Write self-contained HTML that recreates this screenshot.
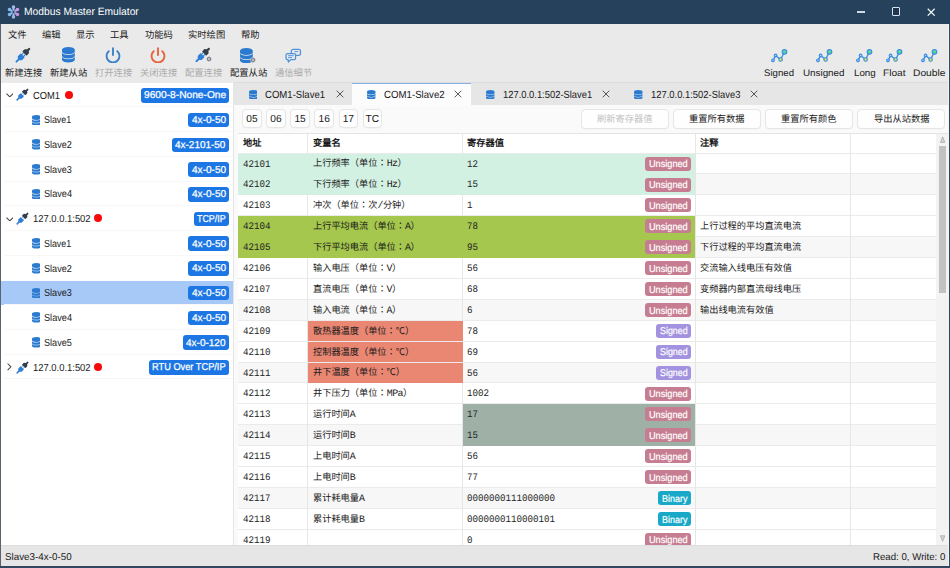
<!DOCTYPE html>
<html lang="zh-CN">
<head>
<meta charset="utf-8">
<title>Modbus Master Emulator</title>
<style>
*{box-sizing:border-box;margin:0;padding:0}
html,body{width:950px;height:568px;overflow:hidden;background:#eaeaea}
body{font-family:"Liberation Sans",sans-serif;font-size:10px;color:#1a1a1a;position:relative;text-rendering:geometricPrecision}
.x{position:absolute;white-space:nowrap;display:block}
.m{font-family:"Liberation Mono",monospace}
.b{font-weight:bold}
.a{font-size:10px;letter-spacing:-0.5px}
#win{position:absolute;left:0;top:0;width:950px;height:568px;overflow:hidden;background:#eaeaea}
.bd{background:#1c77e4;color:#fff;border-radius:3px;text-align:center}
.tg{border-radius:3px;color:#fff;text-align:center}
.btn{background:#fefefe;border:1px solid #e6e6e6;border-radius:4px;box-shadow:0 0.5px 0.5px rgba(0,0,0,0.04)}
</style>
</head>
<body>
<div id="win">

<div class="x" style="left:0;top:0;width:950px;height:23.6px;background:#25415b"></div>
<svg class="x" style="left:6.60px;top:4.60px;width:13px;height:14px" viewBox="-6.5 -7 13 14"><path d="M0.00 -2.30 L0.00 -5.00" stroke="#a9b9ea" stroke-width="2.1" stroke-linecap="round"/><circle cx="0.00" cy="-5.00" r="1.75" fill="#a9b9ea"/><path d="M1.91 -1.15 L3.98 -2.50" stroke="#c99ae2" stroke-width="2.1" stroke-linecap="round"/><circle cx="3.98" cy="-2.50" r="1.75" fill="#c99ae2"/><path d="M1.91 1.15 L3.98 2.50" stroke="#c292e0" stroke-width="2.1" stroke-linecap="round"/><circle cx="3.98" cy="2.50" r="1.75" fill="#c292e0"/><path d="M0.00 2.30 L0.00 5.00" stroke="#a3b3e4" stroke-width="2.1" stroke-linecap="round"/><circle cx="0.00" cy="5.00" r="1.75" fill="#a3b3e4"/><path d="M-1.91 1.15 L-3.98 2.50" stroke="#7fb9e8" stroke-width="2.1" stroke-linecap="round"/><circle cx="-3.98" cy="2.50" r="1.75" fill="#7fb9e8"/><path d="M-1.91 -1.15 L-3.98 -2.50" stroke="#86bfea" stroke-width="2.1" stroke-linecap="round"/><circle cx="-3.98" cy="-2.50" r="1.75" fill="#86bfea"/><circle cx="0" cy="0" r="1.5" fill="none" stroke="#7e9fd2" stroke-width="0.9"/></svg>
<span id="t1" class="x " style="top:5.11px;font-size:10.70px;line-height:14.98px;left:24.00px;color:#fff;transform-origin:0 50%;transform:scaleX(0.9615);">Modbus Master Emulator</span>
<div class="x" style="left:857.1px;top:11.3px;width:7.8px;height:1.3px;background:#cfdae6"></div>
<div class="x" style="left:891.8px;top:7.4px;width:8.3px;height:8.3px;border:1.1px solid #dbe4ee;border-radius:1px;background:#1e3650"></div>
<svg class="x" style="left:927.40px;top:7.50px;width:8.4px;height:8.4px" viewBox="0 0 8 8"><path d="M0.7 0.7 L7.3 7.3 M7.3 0.7 L0.7 7.3" stroke="#f4f7fa" stroke-width="1.15"/></svg>
<span id="t2" class="x " style="top:27.72px;font-size:9.40px;line-height:13.16px;left:8.30px;transform-origin:0 50%;transform:scaleX(0.9912);">文件</span>
<span id="t3" class="x " style="top:27.72px;font-size:9.40px;line-height:13.16px;left:42.30px;transform-origin:0 50%;transform:scaleX(0.9912);">编辑</span>
<span id="t4" class="x " style="top:27.72px;font-size:9.40px;line-height:13.16px;left:76.30px;transform-origin:0 50%;transform:scaleX(0.9912);">显示</span>
<span id="t5" class="x " style="top:27.72px;font-size:9.40px;line-height:13.16px;left:110.30px;transform-origin:0 50%;transform:scaleX(0.9912);">工具</span>
<span id="t6" class="x " style="top:27.72px;font-size:9.40px;line-height:13.16px;left:145.20px;transform-origin:0 50%;transform:scaleX(0.9914);">功能码</span>
<span id="t7" class="x " style="top:27.72px;font-size:9.40px;line-height:13.16px;left:187.80px;transform-origin:0 50%;transform:scaleX(0.9916);">实时绘图</span>
<span id="t8" class="x " style="top:27.72px;font-size:9.40px;line-height:13.16px;left:241.00px;transform-origin:0 50%;transform:scaleX(0.9912);">帮助</span>
<svg class="x" style="left:15.00px;top:47.00px;width:16.00px;height:16.00px;opacity:1" viewBox="0 0 16 16"><g transform="translate(8.1 8) rotate(-45)"><path d="M-9.4 0 H-4.4" stroke="#2f7fd6" stroke-width="1.9" stroke-linecap="round"/><path d="M-6.3 -1.2 L-4.6 -2.9 H-1.1 A0.7 0.7 0 0 1 -0.4 -2.2 V2.2 A0.7 0.7 0 0 1 -1.1 2.9 H-4.6 L-6.3 1.2 Z" fill="#2f7fd6"/><path d="M-0.7 -1.3 H1.8 M-0.7 1.3 H1.8" stroke="#2f7fd6" stroke-width="1.0"/><path d="M1.8 -2.3 A0.7 0.7 0 0 1 2.5 -3.0 H5.3 L6.9 -1.1 H8.6 A1 1 0 0 1 8.6 1.1 H6.9 L5.3 3.0 H2.5 A0.7 0.7 0 0 1 1.8 2.3 Z" fill="#343e4b"/></g></svg>
<span id="t9" class="x " style="top:66.42px;font-size:9.40px;line-height:13.16px;left:4.60px;color:#1a1a1a;transform-origin:0 50%;transform:scaleX(0.9916);">新建连接</span>
<svg class="x" style="left:61.90px;top:47.30px;width:12.80px;height:15.50px;opacity:1" viewBox="0 0 12 15" preserveAspectRatio="none"><path d="M0 2.7 A6 2.7 0 0 1 12 2.7 V4.4 A6 2.6 0 0 1 0 4.4 Z" fill="#2a7bcf"/><path d="M0 5.15 A6 2.6 0 0 0 12 5.15 V8.5 A6 2.6 0 0 1 0 8.5 Z" fill="#2a7bcf"/><path d="M0 9.25 A6 2.6 0 0 0 12 9.25 V12.3 A6 2.7 0 0 1 0 12.3 Z" fill="#2a7bcf"/></svg>
<span id="t10" class="x " style="top:66.42px;font-size:9.40px;line-height:13.16px;left:49.60px;color:#1a1a1a;transform-origin:0 50%;transform:scaleX(0.9916);">新建从站</span>
<svg class="x" style="left:105.00px;top:46.90px;width:16px;height:16px" viewBox="0 0 16 16"><path d="M3.7 4.2 A6.45 6.45 0 1 0 12.3 4.2" fill="none" stroke="#3b82c8" stroke-width="1.9" stroke-linecap="round"/><path d="M8 1.2 V8.1" stroke="#3b82c8" stroke-width="1.9" stroke-linecap="round"/></svg>
<span id="t11" class="x " style="top:66.42px;font-size:9.40px;line-height:13.16px;left:94.60px;color:#a9a9a9;transform-origin:0 50%;transform:scaleX(0.9916);">打开连接</span>
<svg class="x" style="left:150.00px;top:46.90px;width:16px;height:16px" viewBox="0 0 16 16"><path d="M3.7 4.2 A6.45 6.45 0 1 0 12.3 4.2" fill="none" stroke="#e5653f" stroke-width="1.9" stroke-linecap="round"/><path d="M8 1.2 V8.1" stroke="#e5653f" stroke-width="1.9" stroke-linecap="round"/></svg>
<span id="t12" class="x " style="top:66.42px;font-size:9.40px;line-height:13.16px;left:139.60px;color:#a9a9a9;transform-origin:0 50%;transform:scaleX(0.9916);">关闭连接</span>
<svg class="x" style="left:195.30px;top:46.80px;width:15.60px;height:15.60px;opacity:1" viewBox="0 0 16 16"><g transform="translate(8.1 8) rotate(-45)"><path d="M-9.4 0 H-4.4" stroke="#2f7fd6" stroke-width="1.9" stroke-linecap="round"/><path d="M-6.3 -1.2 L-4.6 -2.9 H-1.1 A0.7 0.7 0 0 1 -0.4 -2.2 V2.2 A0.7 0.7 0 0 1 -1.1 2.9 H-4.6 L-6.3 1.2 Z" fill="#2f7fd6"/><path d="M-0.7 -1.3 H1.8 M-0.7 1.3 H1.8" stroke="#2f7fd6" stroke-width="1.0"/><path d="M1.8 -2.3 A0.7 0.7 0 0 1 2.5 -3.0 H5.3 L6.9 -1.1 H8.6 A1 1 0 0 1 8.6 1.1 H6.9 L5.3 3.0 H2.5 A0.7 0.7 0 0 1 1.8 2.3 Z" fill="#343e4b"/></g></svg><svg class="x" style="left:204.56px;top:55.38px;width:8px;height:8px" viewBox="-4 -4 8 8"><circle r="2.6" fill="#eaeaea"/><circle r="1.5" fill="none" stroke="#7b818a" stroke-width="1.25"/><path d="M0 -2.6 V2.6 M-2.6 0 H2.6 M-1.85 -1.85 L1.85 1.85 M-1.85 1.85 L1.85 -1.85" stroke="#7b818a" stroke-width="0.85" stroke-dasharray="0.7 3.8 0.7 10"/></svg>
<span id="t13" class="x " style="top:66.42px;font-size:9.40px;line-height:13.16px;left:184.60px;color:#a9a9a9;transform-origin:0 50%;transform:scaleX(0.9916);">配置连接</span>
<svg class="x" style="left:239.90px;top:47.50px;width:12.80px;height:15.20px;opacity:1" viewBox="0 0 12 15" preserveAspectRatio="none"><path d="M0 2.7 A6 2.7 0 0 1 12 2.7 V4.4 A6 2.6 0 0 1 0 4.4 Z" fill="#2a7bcf"/><path d="M0 5.15 A6 2.6 0 0 0 12 5.15 V8.5 A6 2.6 0 0 1 0 8.5 Z" fill="#2a7bcf"/><path d="M0 9.25 A6 2.6 0 0 0 12 9.25 V12.3 A6 2.7 0 0 1 0 12.3 Z" fill="#2a7bcf"/></svg><svg class="x" style="left:248.96px;top:56.12px;width:8px;height:8px" viewBox="-4 -4 8 8"><circle r="2.6" fill="#eaeaea"/><circle r="1.5" fill="none" stroke="#7b818a" stroke-width="1.25"/><path d="M0 -2.6 V2.6 M-2.6 0 H2.6 M-1.85 -1.85 L1.85 1.85 M-1.85 1.85 L1.85 -1.85" stroke="#7b818a" stroke-width="0.85" stroke-dasharray="0.7 3.8 0.7 10"/></svg>
<span id="t14" class="x " style="top:66.42px;font-size:9.40px;line-height:13.16px;left:229.60px;color:#1a1a1a;transform-origin:0 50%;transform:scaleX(0.9916);">配置从站</span>
<svg class="x" style="left:285.00px;top:47.60px;width:17px;height:15px" viewBox="0 0 17 15"><rect x="6.35" y="1.35" width="9.1" height="6.0" rx="1.7" fill="#eaeaea" stroke="#4f93da" stroke-width="1.3"/><path d="M2.5 5.55 H9.1 A1.45 1.45 0 0 1 10.55 7 V10.2 A1.45 1.45 0 0 1 9.1 11.65 H5.9 L3.4 14 L3.1 11.65 H2.5 A1.45 1.45 0 0 1 1.05 10.2 V7 A1.45 1.45 0 0 1 2.5 5.55 Z" fill="#eaeaea" stroke="#4f93da" stroke-width="1.3" stroke-linejoin="round"/><path d="M3.1 7.7 H8.6 M3.1 9.6 H7 M9.4 3.6 H13.2" stroke="#4f93da" stroke-width="0.95"/></svg>
<span id="t15" class="x " style="top:66.42px;font-size:9.40px;line-height:13.16px;left:274.60px;color:#a9a9a9;transform-origin:0 50%;transform:scaleX(0.9916);">通信细节</span>
<svg class="x" style="left:771.10px;top:47.60px;width:17px;height:15px" viewBox="0 0 17 15"><path d="M2 12.3 L4.6 7.5 L9.6 11.5 L13.5 3.8" fill="none" stroke="#3a8de0" stroke-width="1.4"/><circle cx="2" cy="12.3" r="1.35" fill="#a9d3f7" stroke="#3a8de0" stroke-width="1.1"/><circle cx="4.6" cy="7.5" r="1.35" fill="#a9d3f7" stroke="#3a8de0" stroke-width="1.1"/><circle cx="9.6" cy="11.5" r="1.75" fill="#d6e64c" stroke="#3a8de0" stroke-width="1.1"/><circle cx="13.5" cy="3.8" r="2.35" fill="#55d49c" stroke="#3a8de0" stroke-width="1.1"/></svg>
<span id="t16" class="x " style="top:67.05px;font-size:9.50px;line-height:13.30px;left:764.30px;transform-origin:0 50%;transform:scaleX(1.0137);">Signed</span>
<svg class="x" style="left:815.80px;top:47.60px;width:17px;height:15px" viewBox="0 0 17 15"><path d="M2 12.3 L4.6 7.5 L9.6 11.5 L13.5 3.8" fill="none" stroke="#3a8de0" stroke-width="1.4"/><circle cx="2" cy="12.3" r="1.35" fill="#a9d3f7" stroke="#3a8de0" stroke-width="1.1"/><circle cx="4.6" cy="7.5" r="1.35" fill="#a9d3f7" stroke="#3a8de0" stroke-width="1.1"/><circle cx="9.6" cy="11.5" r="1.75" fill="#d6e64c" stroke="#3a8de0" stroke-width="1.1"/><circle cx="13.5" cy="3.8" r="2.35" fill="#55d49c" stroke="#3a8de0" stroke-width="1.1"/></svg>
<span id="t17" class="x " style="top:67.05px;font-size:9.50px;line-height:13.30px;left:803.25px;transform-origin:0 50%;transform:scaleX(1.0339);">Unsigned</span>
<svg class="x" style="left:856.20px;top:47.60px;width:17px;height:15px" viewBox="0 0 17 15"><path d="M2 12.3 L4.6 7.5 L9.6 11.5 L13.5 3.8" fill="none" stroke="#3a8de0" stroke-width="1.4"/><circle cx="2" cy="12.3" r="1.35" fill="#a9d3f7" stroke="#3a8de0" stroke-width="1.1"/><circle cx="4.6" cy="7.5" r="1.35" fill="#a9d3f7" stroke="#3a8de0" stroke-width="1.1"/><circle cx="9.6" cy="11.5" r="1.75" fill="#d6e64c" stroke="#3a8de0" stroke-width="1.1"/><circle cx="13.5" cy="3.8" r="2.35" fill="#55d49c" stroke="#3a8de0" stroke-width="1.1"/></svg>
<span id="t18" class="x " style="top:67.05px;font-size:9.50px;line-height:13.30px;left:853.55px;transform-origin:0 50%;transform:scaleX(1.0265);">Long</span>
<svg class="x" style="left:885.80px;top:47.60px;width:17px;height:15px" viewBox="0 0 17 15"><path d="M2 12.3 L4.6 7.5 L9.6 11.5 L13.5 3.8" fill="none" stroke="#3a8de0" stroke-width="1.4"/><circle cx="2" cy="12.3" r="1.35" fill="#a9d3f7" stroke="#3a8de0" stroke-width="1.1"/><circle cx="4.6" cy="7.5" r="1.35" fill="#a9d3f7" stroke="#3a8de0" stroke-width="1.1"/><circle cx="9.6" cy="11.5" r="1.75" fill="#d6e64c" stroke="#3a8de0" stroke-width="1.1"/><circle cx="13.5" cy="3.8" r="2.35" fill="#55d49c" stroke="#3a8de0" stroke-width="1.1"/></svg>
<span id="t19" class="x " style="top:67.05px;font-size:9.50px;line-height:13.30px;left:882.75px;transform-origin:0 50%;transform:scaleX(1.0651);">Float</span>
<svg class="x" style="left:920.80px;top:47.60px;width:17px;height:15px" viewBox="0 0 17 15"><path d="M2 12.3 L4.6 7.5 L9.6 11.5 L13.5 3.8" fill="none" stroke="#3a8de0" stroke-width="1.4"/><circle cx="2" cy="12.3" r="1.35" fill="#a9d3f7" stroke="#3a8de0" stroke-width="1.1"/><circle cx="4.6" cy="7.5" r="1.35" fill="#a9d3f7" stroke="#3a8de0" stroke-width="1.1"/><circle cx="9.6" cy="11.5" r="1.75" fill="#d6e64c" stroke="#3a8de0" stroke-width="1.1"/><circle cx="13.5" cy="3.8" r="2.35" fill="#55d49c" stroke="#3a8de0" stroke-width="1.1"/></svg>
<span id="t20" class="x " style="top:67.05px;font-size:9.50px;line-height:13.30px;left:912.75px;transform-origin:0 50%;transform:scaleX(1.0794);">Double</span>
<div class="x" style="left:233.5px;top:81.8px;width:715px;height:1px;background:#dcdcdc"></div>
<div class="x" style="left:1px;top:82.60px;width:232.2px;height:463.00px;background:#fff"></div>
<svg class="x" style="left:5.60px;top:92.96px;width:7.6px;height:4.5px" viewBox="0 0 7.6 4.5"><path d="M0.5 0.6 L3.8 3.9 L7.1 0.6" fill="none" stroke="#484848" stroke-width="1.05"/></svg>
<svg class="x" style="left:16.20px;top:88.46px;width:13.00px;height:13.00px;opacity:1" viewBox="0 0 16 16"><g transform="translate(8.1 8) rotate(-45)"><path d="M-9.4 0 H-4.4" stroke="#2f7fd6" stroke-width="1.9" stroke-linecap="round"/><path d="M-6.3 -1.2 L-4.6 -2.9 H-1.1 A0.7 0.7 0 0 1 -0.4 -2.2 V2.2 A0.7 0.7 0 0 1 -1.1 2.9 H-4.6 L-6.3 1.2 Z" fill="#2f7fd6"/><path d="M-0.7 -1.3 H1.8 M-0.7 1.3 H1.8" stroke="#2f7fd6" stroke-width="1.0"/><path d="M1.8 -2.3 A0.7 0.7 0 0 1 2.5 -3.0 H5.3 L6.9 -1.1 H8.6 A1 1 0 0 1 8.6 1.1 H6.9 L5.3 3.0 H2.5 A0.7 0.7 0 0 1 1.8 2.3 Z" fill="#343e4b"/></g></svg>
<span id="t21" class="x " style="top:89.52px;font-size:10.20px;line-height:14.28px;left:32.70px;transform-origin:0 50%;transform:scaleX(0.9138);">COM1</span>
<div class="x" style="left:65.00px;top:90.56px;width:8.1px;height:8.1px;border-radius:50%;background:#f90a0a"></div>
<div class="x bd" style="left:140.90px;top:88.06px;width:88.40px;height:14.6px"></div>
<span id="t22" class="x " style="top:89.36px;font-size:10.00px;line-height:14.00px;left:144.00px;color:#fff;transform-origin:0 50%;transform:scaleX(1.0197);-webkit-text-stroke:0.25px #fff;">9600-8-None-One</span>
<div class="x" style="left:4px;top:106.33px;width:229px;height:1px;background:#f8f8f8"></div>
<svg class="x" style="left:31.70px;top:114.59px;width:8.70px;height:10.60px;opacity:1" viewBox="0 0 12 15" preserveAspectRatio="none"><path d="M0 2.7 A6 2.7 0 0 1 12 2.7 V4.4 A6 2.6 0 0 1 0 4.4 Z" fill="#2a7bcf"/><path d="M0 5.15 A6 2.6 0 0 0 12 5.15 V8.5 A6 2.6 0 0 1 0 8.5 Z" fill="#2a7bcf"/><path d="M0 9.25 A6 2.6 0 0 0 12 9.25 V12.3 A6 2.7 0 0 1 0 12.3 Z" fill="#2a7bcf"/></svg>
<span id="t23" class="x " style="top:114.25px;font-size:10.20px;line-height:14.28px;left:44.40px;transform-origin:0 50%;transform:scaleX(0.8730);">Slave1</span>
<div class="x bd" style="left:188.20px;top:112.80px;width:41.10px;height:14.6px"></div>
<span id="t24" class="x " style="top:114.09px;font-size:10.00px;line-height:14.00px;left:191.65px;color:#fff;transform-origin:0 50%;transform:scaleX(1.0087);-webkit-text-stroke:0.25px #fff;">4x-0-50</span>
<div class="x" style="left:4px;top:131.06px;width:229px;height:1px;background:#f8f8f8"></div>
<svg class="x" style="left:31.70px;top:139.33px;width:8.70px;height:10.60px;opacity:1" viewBox="0 0 12 15" preserveAspectRatio="none"><path d="M0 2.7 A6 2.7 0 0 1 12 2.7 V4.4 A6 2.6 0 0 1 0 4.4 Z" fill="#2a7bcf"/><path d="M0 5.15 A6 2.6 0 0 0 12 5.15 V8.5 A6 2.6 0 0 1 0 8.5 Z" fill="#2a7bcf"/><path d="M0 9.25 A6 2.6 0 0 0 12 9.25 V12.3 A6 2.7 0 0 1 0 12.3 Z" fill="#2a7bcf"/></svg>
<span id="t25" class="x " style="top:138.99px;font-size:10.20px;line-height:14.28px;left:44.40px;transform-origin:0 50%;transform:scaleX(0.8923);">Slave2</span>
<div class="x bd" style="left:172.00px;top:137.53px;width:57.30px;height:14.6px"></div>
<span id="t26" class="x " style="top:138.83px;font-size:10.00px;line-height:14.00px;left:175.45px;color:#fff;transform-origin:0 50%;transform:scaleX(0.9962);-webkit-text-stroke:0.25px #fff;">4x-2101-50</span>
<div class="x" style="left:4px;top:155.79px;width:229px;height:1px;background:#f8f8f8"></div>
<svg class="x" style="left:31.70px;top:164.06px;width:8.70px;height:10.60px;opacity:1" viewBox="0 0 12 15" preserveAspectRatio="none"><path d="M0 2.7 A6 2.7 0 0 1 12 2.7 V4.4 A6 2.6 0 0 1 0 4.4 Z" fill="#2a7bcf"/><path d="M0 5.15 A6 2.6 0 0 0 12 5.15 V8.5 A6 2.6 0 0 1 0 8.5 Z" fill="#2a7bcf"/><path d="M0 9.25 A6 2.6 0 0 0 12 9.25 V12.3 A6 2.7 0 0 1 0 12.3 Z" fill="#2a7bcf"/></svg>
<span id="t27" class="x " style="top:163.72px;font-size:10.20px;line-height:14.28px;left:44.40px;transform-origin:0 50%;transform:scaleX(0.8923);">Slave3</span>
<div class="x bd" style="left:188.20px;top:162.25px;width:41.10px;height:14.6px"></div>
<span id="t28" class="x " style="top:163.56px;font-size:10.00px;line-height:14.00px;left:191.65px;color:#fff;transform-origin:0 50%;transform:scaleX(1.0087);-webkit-text-stroke:0.25px #fff;">4x-0-50</span>
<div class="x" style="left:4px;top:180.52px;width:229px;height:1px;background:#f8f8f8"></div>
<svg class="x" style="left:31.70px;top:188.78px;width:8.70px;height:10.60px;opacity:1" viewBox="0 0 12 15" preserveAspectRatio="none"><path d="M0 2.7 A6 2.7 0 0 1 12 2.7 V4.4 A6 2.6 0 0 1 0 4.4 Z" fill="#2a7bcf"/><path d="M0 5.15 A6 2.6 0 0 0 12 5.15 V8.5 A6 2.6 0 0 1 0 8.5 Z" fill="#2a7bcf"/><path d="M0 9.25 A6 2.6 0 0 0 12 9.25 V12.3 A6 2.7 0 0 1 0 12.3 Z" fill="#2a7bcf"/></svg>
<span id="t29" class="x " style="top:188.45px;font-size:10.20px;line-height:14.28px;left:44.40px;transform-origin:0 50%;transform:scaleX(0.8987);">Slave4</span>
<div class="x bd" style="left:188.20px;top:186.98px;width:41.10px;height:14.6px"></div>
<span id="t30" class="x " style="top:188.28px;font-size:10.00px;line-height:14.00px;left:191.65px;color:#fff;transform-origin:0 50%;transform:scaleX(1.0087);-webkit-text-stroke:0.25px #fff;">4x-0-50</span>
<div class="x" style="left:4px;top:205.25px;width:229px;height:1px;background:#f8f8f8"></div>
<svg class="x" style="left:5.60px;top:216.62px;width:7.6px;height:4.5px" viewBox="0 0 7.6 4.5"><path d="M0.5 0.6 L3.8 3.9 L7.1 0.6" fill="none" stroke="#484848" stroke-width="1.05"/></svg>
<svg class="x" style="left:16.20px;top:212.12px;width:13.00px;height:13.00px;opacity:1" viewBox="0 0 16 16"><g transform="translate(8.1 8) rotate(-45)"><path d="M-9.4 0 H-4.4" stroke="#2f7fd6" stroke-width="1.9" stroke-linecap="round"/><path d="M-6.3 -1.2 L-4.6 -2.9 H-1.1 A0.7 0.7 0 0 1 -0.4 -2.2 V2.2 A0.7 0.7 0 0 1 -1.1 2.9 H-4.6 L-6.3 1.2 Z" fill="#2f7fd6"/><path d="M-0.7 -1.3 H1.8 M-0.7 1.3 H1.8" stroke="#2f7fd6" stroke-width="1.0"/><path d="M1.8 -2.3 A0.7 0.7 0 0 1 2.5 -3.0 H5.3 L6.9 -1.1 H8.6 A1 1 0 0 1 8.6 1.1 H6.9 L5.3 3.0 H2.5 A0.7 0.7 0 0 1 1.8 2.3 Z" fill="#343e4b"/></g></svg>
<span id="t31" class="x " style="top:213.18px;font-size:10.20px;line-height:14.28px;left:32.70px;transform-origin:0 50%;transform:scaleX(0.9241);">127.0.0.1:502</span>
<div class="x" style="left:94.30px;top:214.22px;width:8.1px;height:8.1px;border-radius:50%;background:#f90a0a"></div>
<div class="x bd" style="left:193.70px;top:211.72px;width:35.60px;height:14.6px"></div>
<span id="t32" class="x " style="top:213.02px;font-size:10.00px;line-height:14.00px;left:197.20px;color:#fff;transform-origin:0 50%;transform:scaleX(0.8873);-webkit-text-stroke:0.25px #fff;">TCP/IP</span>
<div class="x" style="left:4px;top:229.98px;width:229px;height:1px;background:#f8f8f8"></div>
<svg class="x" style="left:31.70px;top:238.25px;width:8.70px;height:10.60px;opacity:1" viewBox="0 0 12 15" preserveAspectRatio="none"><path d="M0 2.7 A6 2.7 0 0 1 12 2.7 V4.4 A6 2.6 0 0 1 0 4.4 Z" fill="#2a7bcf"/><path d="M0 5.15 A6 2.6 0 0 0 12 5.15 V8.5 A6 2.6 0 0 1 0 8.5 Z" fill="#2a7bcf"/><path d="M0 9.25 A6 2.6 0 0 0 12 9.25 V12.3 A6 2.7 0 0 1 0 12.3 Z" fill="#2a7bcf"/></svg>
<span id="t33" class="x " style="top:237.91px;font-size:10.20px;line-height:14.28px;left:44.40px;transform-origin:0 50%;transform:scaleX(0.8730);">Slave1</span>
<div class="x bd" style="left:188.20px;top:236.44px;width:41.10px;height:14.6px"></div>
<span id="t34" class="x " style="top:237.75px;font-size:10.00px;line-height:14.00px;left:191.65px;color:#fff;transform-origin:0 50%;transform:scaleX(1.0087);-webkit-text-stroke:0.25px #fff;">4x-0-50</span>
<div class="x" style="left:4px;top:254.71px;width:229px;height:1px;background:#f8f8f8"></div>
<svg class="x" style="left:31.70px;top:262.97px;width:8.70px;height:10.60px;opacity:1" viewBox="0 0 12 15" preserveAspectRatio="none"><path d="M0 2.7 A6 2.7 0 0 1 12 2.7 V4.4 A6 2.6 0 0 1 0 4.4 Z" fill="#2a7bcf"/><path d="M0 5.15 A6 2.6 0 0 0 12 5.15 V8.5 A6 2.6 0 0 1 0 8.5 Z" fill="#2a7bcf"/><path d="M0 9.25 A6 2.6 0 0 0 12 9.25 V12.3 A6 2.7 0 0 1 0 12.3 Z" fill="#2a7bcf"/></svg>
<span id="t35" class="x " style="top:262.63px;font-size:10.20px;line-height:14.28px;left:44.40px;transform-origin:0 50%;transform:scaleX(0.8923);">Slave2</span>
<div class="x bd" style="left:188.20px;top:261.17px;width:41.10px;height:14.6px"></div>
<span id="t36" class="x " style="top:262.47px;font-size:10.00px;line-height:14.00px;left:191.65px;color:#fff;transform-origin:0 50%;transform:scaleX(1.0087);-webkit-text-stroke:0.25px #fff;">4x-0-50</span>
<div class="x" style="left:1px;top:280.54px;width:232.2px;height:24.73px;background:#a6c9f8"></div>
<svg class="x" style="left:31.70px;top:287.70px;width:8.70px;height:10.60px;opacity:1" viewBox="0 0 12 15" preserveAspectRatio="none"><path d="M0 2.7 A6 2.7 0 0 1 12 2.7 V4.4 A6 2.6 0 0 1 0 4.4 Z" fill="#2a7bcf"/><path d="M0 5.15 A6 2.6 0 0 0 12 5.15 V8.5 A6 2.6 0 0 1 0 8.5 Z" fill="#2a7bcf"/><path d="M0 9.25 A6 2.6 0 0 0 12 9.25 V12.3 A6 2.7 0 0 1 0 12.3 Z" fill="#2a7bcf"/></svg>
<span id="t37" class="x " style="top:287.37px;font-size:10.20px;line-height:14.28px;left:44.40px;transform-origin:0 50%;transform:scaleX(0.8923);">Slave3</span>
<div class="x bd" style="left:188.20px;top:285.90px;width:41.10px;height:14.6px"></div>
<span id="t38" class="x " style="top:287.20px;font-size:10.00px;line-height:14.00px;left:191.65px;color:#fff;transform-origin:0 50%;transform:scaleX(1.0087);-webkit-text-stroke:0.25px #fff;">4x-0-50</span>
<div class="x" style="left:4px;top:304.17px;width:229px;height:1px;background:#f8f8f8"></div>
<svg class="x" style="left:31.70px;top:312.43px;width:8.70px;height:10.60px;opacity:1" viewBox="0 0 12 15" preserveAspectRatio="none"><path d="M0 2.7 A6 2.7 0 0 1 12 2.7 V4.4 A6 2.6 0 0 1 0 4.4 Z" fill="#2a7bcf"/><path d="M0 5.15 A6 2.6 0 0 0 12 5.15 V8.5 A6 2.6 0 0 1 0 8.5 Z" fill="#2a7bcf"/><path d="M0 9.25 A6 2.6 0 0 0 12 9.25 V12.3 A6 2.7 0 0 1 0 12.3 Z" fill="#2a7bcf"/></svg>
<span id="t39" class="x " style="top:312.09px;font-size:10.20px;line-height:14.28px;left:44.40px;transform-origin:0 50%;transform:scaleX(0.8987);">Slave4</span>
<div class="x bd" style="left:188.20px;top:310.63px;width:41.10px;height:14.6px"></div>
<span id="t40" class="x " style="top:311.93px;font-size:10.00px;line-height:14.00px;left:191.65px;color:#fff;transform-origin:0 50%;transform:scaleX(1.0087);-webkit-text-stroke:0.25px #fff;">4x-0-50</span>
<div class="x" style="left:4px;top:328.90px;width:229px;height:1px;background:#f8f8f8"></div>
<svg class="x" style="left:31.70px;top:337.16px;width:8.70px;height:10.60px;opacity:1" viewBox="0 0 12 15" preserveAspectRatio="none"><path d="M0 2.7 A6 2.7 0 0 1 12 2.7 V4.4 A6 2.6 0 0 1 0 4.4 Z" fill="#2a7bcf"/><path d="M0 5.15 A6 2.6 0 0 0 12 5.15 V8.5 A6 2.6 0 0 1 0 8.5 Z" fill="#2a7bcf"/><path d="M0 9.25 A6 2.6 0 0 0 12 9.25 V12.3 A6 2.7 0 0 1 0 12.3 Z" fill="#2a7bcf"/></svg>
<span id="t41" class="x " style="top:336.82px;font-size:10.20px;line-height:14.28px;left:44.40px;transform-origin:0 50%;transform:scaleX(0.8923);">Slave5</span>
<div class="x bd" style="left:182.90px;top:335.36px;width:46.40px;height:14.6px"></div>
<span id="t42" class="x " style="top:336.66px;font-size:10.00px;line-height:14.00px;left:186.35px;color:#fff;transform-origin:0 50%;transform:scaleX(1.0008);-webkit-text-stroke:0.25px #fff;">4x-0-120</span>
<div class="x" style="left:4px;top:353.63px;width:229px;height:1px;background:#f8f8f8"></div>
<svg class="x" style="left:7.40px;top:363.09px;width:4.5px;height:7.6px" viewBox="0 0 4.5 7.6"><path d="M0.6 0.5 L3.9 3.8 L0.6 7.1" fill="none" stroke="#484848" stroke-width="1.05"/></svg>
<svg class="x" style="left:16.20px;top:360.50px;width:13.00px;height:13.00px;opacity:1" viewBox="0 0 16 16"><g transform="translate(8.1 8) rotate(-45)"><path d="M-9.4 0 H-4.4" stroke="#2f7fd6" stroke-width="1.9" stroke-linecap="round"/><path d="M-6.3 -1.2 L-4.6 -2.9 H-1.1 A0.7 0.7 0 0 1 -0.4 -2.2 V2.2 A0.7 0.7 0 0 1 -1.1 2.9 H-4.6 L-6.3 1.2 Z" fill="#2f7fd6"/><path d="M-0.7 -1.3 H1.8 M-0.7 1.3 H1.8" stroke="#2f7fd6" stroke-width="1.0"/><path d="M1.8 -2.3 A0.7 0.7 0 0 1 2.5 -3.0 H5.3 L6.9 -1.1 H8.6 A1 1 0 0 1 8.6 1.1 H6.9 L5.3 3.0 H2.5 A0.7 0.7 0 0 1 1.8 2.3 Z" fill="#343e4b"/></g></svg>
<span id="t43" class="x " style="top:361.56px;font-size:10.20px;line-height:14.28px;left:32.70px;transform-origin:0 50%;transform:scaleX(0.9241);">127.0.0.1:502</span>
<div class="x" style="left:94.30px;top:362.59px;width:8.1px;height:8.1px;border-radius:50%;background:#f90a0a"></div>
<div class="x bd" style="left:149.10px;top:360.09px;width:80.20px;height:14.6px"></div>
<span id="t44" class="x " style="top:361.39px;font-size:10.00px;line-height:14.00px;left:152.40px;color:#fff;transform-origin:0 50%;transform:scaleX(0.9240);-webkit-text-stroke:0.25px #fff;">RTU Over TCP/IP</span>
<div class="x" style="left:4px;top:378.36px;width:229px;height:1px;background:#f5f5f5"></div>
<div class="x" style="left:233.2px;top:82.6px;width:4.4px;height:463px;background:#f7f7f7;border-left:0.7px solid #e4e4e4"></div>
<div class="x" style="left:234px;top:82.6px;width:714.5px;height:22.6px;background:#e6e6e6"></div>
<div class="x" style="left:234px;top:105.2px;width:714.5px;height:441px;background:#fafafa"></div>
<svg class="x" style="left:248.90px;top:89.90px;width:8.50px;height:9.40px;opacity:1" viewBox="0 0 12 15" preserveAspectRatio="none"><path d="M0 2.7 A6 2.7 0 0 1 12 2.7 V4.4 A6 2.6 0 0 1 0 4.4 Z" fill="#2a7bcf"/><path d="M0 5.15 A6 2.6 0 0 0 12 5.15 V8.5 A6 2.6 0 0 1 0 8.5 Z" fill="#2a7bcf"/><path d="M0 9.25 A6 2.6 0 0 0 12 9.25 V12.3 A6 2.7 0 0 1 0 12.3 Z" fill="#2a7bcf"/></svg>
<span id="t45" class="x " style="top:88.79px;font-size:10.30px;line-height:14.42px;left:265.00px;transform-origin:0 50%;transform:scaleX(0.9293);">COM1-Slave1</span>
<svg class="x" style="left:335.60px;top:90.30px;width:8px;height:8px" viewBox="0 0 8 8"><path d="M0.7 0.7 L7.3 7.3 M7.3 0.7 L0.7 7.3" stroke="#3c3c3c" stroke-width="0.85"/></svg>
<div class="x" style="left:352.10px;top:82.6px;width:118.90px;height:23px;background:#fcfcfc;border-top:1.4px solid #86b0e6"></div>
<svg class="x" style="left:367.40px;top:89.90px;width:8.50px;height:9.40px;opacity:1" viewBox="0 0 12 15" preserveAspectRatio="none"><path d="M0 2.7 A6 2.7 0 0 1 12 2.7 V4.4 A6 2.6 0 0 1 0 4.4 Z" fill="#2a7bcf"/><path d="M0 5.15 A6 2.6 0 0 0 12 5.15 V8.5 A6 2.6 0 0 1 0 8.5 Z" fill="#2a7bcf"/><path d="M0 9.25 A6 2.6 0 0 0 12 9.25 V12.3 A6 2.7 0 0 1 0 12.3 Z" fill="#2a7bcf"/></svg>
<span id="t46" class="x " style="top:88.79px;font-size:10.30px;line-height:14.42px;left:383.60px;transform-origin:0 50%;transform:scaleX(0.9386);">COM1-Slave2</span>
<svg class="x" style="left:454.20px;top:90.30px;width:8px;height:8px" viewBox="0 0 8 8"><path d="M0.7 0.7 L7.3 7.3 M7.3 0.7 L0.7 7.3" stroke="#3c3c3c" stroke-width="0.85"/></svg>
<svg class="x" style="left:486.00px;top:89.90px;width:8.50px;height:9.40px;opacity:1" viewBox="0 0 12 15" preserveAspectRatio="none"><path d="M0 2.7 A6 2.7 0 0 1 12 2.7 V4.4 A6 2.6 0 0 1 0 4.4 Z" fill="#2a7bcf"/><path d="M0 5.15 A6 2.6 0 0 0 12 5.15 V8.5 A6 2.6 0 0 1 0 8.5 Z" fill="#2a7bcf"/><path d="M0 9.25 A6 2.6 0 0 0 12 9.25 V12.3 A6 2.7 0 0 1 0 12.3 Z" fill="#2a7bcf"/></svg>
<span id="t47" class="x " style="top:88.79px;font-size:10.30px;line-height:14.42px;left:503.00px;transform-origin:0 50%;transform:scaleX(0.9111);">127.0.0.1:502-Slave1</span>
<svg class="x" style="left:601.60px;top:90.30px;width:8px;height:8px" viewBox="0 0 8 8"><path d="M0.7 0.7 L7.3 7.3 M7.3 0.7 L0.7 7.3" stroke="#3c3c3c" stroke-width="0.85"/></svg>
<svg class="x" style="left:634.00px;top:89.90px;width:8.50px;height:9.40px;opacity:1" viewBox="0 0 12 15" preserveAspectRatio="none"><path d="M0 2.7 A6 2.7 0 0 1 12 2.7 V4.4 A6 2.6 0 0 1 0 4.4 Z" fill="#2a7bcf"/><path d="M0 5.15 A6 2.6 0 0 0 12 5.15 V8.5 A6 2.6 0 0 1 0 8.5 Z" fill="#2a7bcf"/><path d="M0 9.25 A6 2.6 0 0 0 12 9.25 V12.3 A6 2.7 0 0 1 0 12.3 Z" fill="#2a7bcf"/></svg>
<span id="t48" class="x " style="top:88.79px;font-size:10.30px;line-height:14.42px;left:650.80px;transform-origin:0 50%;transform:scaleX(0.9131);">127.0.0.1:502-Slave3</span>
<svg class="x" style="left:749.80px;top:90.30px;width:8px;height:8px" viewBox="0 0 8 8"><path d="M0.7 0.7 L7.3 7.3 M7.3 0.7 L0.7 7.3" stroke="#3c3c3c" stroke-width="0.85"/></svg>
<div class="x btn" style="left:242.10px;top:108.6px;width:19.6px;height:19.9px"></div>
<span id="t49" class="x " style="top:112.86px;font-size:10.20px;line-height:14.28px;left:251.90px;transform:translateX(-50%);">05</span>
<div class="x btn" style="left:266.20px;top:108.6px;width:19.6px;height:19.9px"></div>
<span id="t50" class="x " style="top:112.86px;font-size:10.20px;line-height:14.28px;left:276.00px;transform:translateX(-50%);">06</span>
<div class="x btn" style="left:290.30px;top:108.6px;width:19.6px;height:19.9px"></div>
<span id="t51" class="x " style="top:112.86px;font-size:10.20px;line-height:14.28px;left:300.10px;transform:translateX(-50%);">15</span>
<div class="x btn" style="left:314.40px;top:108.6px;width:19.6px;height:19.9px"></div>
<span id="t52" class="x " style="top:112.86px;font-size:10.20px;line-height:14.28px;left:324.20px;transform:translateX(-50%);">16</span>
<div class="x btn" style="left:338.50px;top:108.6px;width:19.6px;height:19.9px"></div>
<span id="t53" class="x " style="top:112.86px;font-size:10.20px;line-height:14.28px;left:348.30px;transform:translateX(-50%);">17</span>
<div class="x btn" style="left:362.60px;top:108.6px;width:19.6px;height:19.9px"></div>
<span id="t54" class="x " style="top:112.86px;font-size:10.20px;line-height:14.28px;left:372.40px;transform:translateX(-50%);">TC</span>
<div class="x btn" style="left:580.60px;top:108.8px;width:88.00px;height:20px"></div>
<span id="t55" class="x " style="top:113.05px;font-size:9.35px;line-height:13.09px;left:596.90px;color:#c4c4c4;transform-origin:0 50%;transform:scaleX(0.9879);">刷新寄存器值</span>
<div class="x btn" style="left:672.80px;top:108.8px;width:88.00px;height:20px"></div>
<span id="t56" class="x " style="top:113.05px;font-size:9.35px;line-height:13.09px;left:689.10px;color:#1a1a1a;transform-origin:0 50%;transform:scaleX(0.9879);">重置所有数据</span>
<div class="x btn" style="left:765.00px;top:108.8px;width:88.00px;height:20px"></div>
<span id="t57" class="x " style="top:113.05px;font-size:9.35px;line-height:13.09px;left:781.30px;color:#1a1a1a;transform-origin:0 50%;transform:scaleX(0.9879);">重置所有颜色</span>
<div class="x btn" style="left:857.20px;top:108.8px;width:88.00px;height:20px"></div>
<span id="t58" class="x " style="top:113.05px;font-size:9.35px;line-height:13.09px;left:873.50px;color:#1a1a1a;transform-origin:0 50%;transform:scaleX(0.9879);">导出从站数据</span>
<div class="x" style="left:237.60px;top:132.80px;width:698.70px;height:412.80px;background:#fff;border-top:1px solid #e4e4e4"></div>
<div class="x" style="left:237.60px;top:174.10px;width:698.70px;height:20.90px;background:#f7f7f7"></div>
<div class="x" style="left:237.60px;top:236.80px;width:698.70px;height:20.90px;background:#f7f7f7"></div>
<div class="x" style="left:237.60px;top:299.50px;width:698.70px;height:20.90px;background:#f7f7f7"></div>
<div class="x" style="left:237.60px;top:362.20px;width:698.70px;height:20.90px;background:#f7f7f7"></div>
<div class="x" style="left:237.60px;top:424.90px;width:698.70px;height:20.90px;background:#f7f7f7"></div>
<div class="x" style="left:237.60px;top:487.60px;width:698.70px;height:20.90px;background:#f7f7f7"></div>
<div class="x" style="left:237.60px;top:152.55px;width:698.70px;height:1px;background:#ebebeb"></div>
<div class="x" style="left:237.60px;top:173.45px;width:698.70px;height:1px;background:#ebebeb"></div>
<div class="x" style="left:237.60px;top:194.35px;width:698.70px;height:1px;background:#ebebeb"></div>
<div class="x" style="left:237.60px;top:215.25px;width:698.70px;height:1px;background:#ebebeb"></div>
<div class="x" style="left:237.60px;top:236.15px;width:698.70px;height:1px;background:#ebebeb"></div>
<div class="x" style="left:237.60px;top:257.05px;width:698.70px;height:1px;background:#ebebeb"></div>
<div class="x" style="left:237.60px;top:277.95px;width:698.70px;height:1px;background:#ebebeb"></div>
<div class="x" style="left:237.60px;top:298.85px;width:698.70px;height:1px;background:#ebebeb"></div>
<div class="x" style="left:237.60px;top:319.75px;width:698.70px;height:1px;background:#ebebeb"></div>
<div class="x" style="left:237.60px;top:340.65px;width:698.70px;height:1px;background:#ebebeb"></div>
<div class="x" style="left:237.60px;top:361.55px;width:698.70px;height:1px;background:#ebebeb"></div>
<div class="x" style="left:237.60px;top:382.45px;width:698.70px;height:1px;background:#ebebeb"></div>
<div class="x" style="left:237.60px;top:403.35px;width:698.70px;height:1px;background:#ebebeb"></div>
<div class="x" style="left:237.60px;top:424.25px;width:698.70px;height:1px;background:#ebebeb"></div>
<div class="x" style="left:237.60px;top:445.15px;width:698.70px;height:1px;background:#ebebeb"></div>
<div class="x" style="left:237.60px;top:466.05px;width:698.70px;height:1px;background:#ebebeb"></div>
<div class="x" style="left:237.60px;top:486.95px;width:698.70px;height:1px;background:#ebebeb"></div>
<div class="x" style="left:237.60px;top:507.85px;width:698.70px;height:1px;background:#ebebeb"></div>
<div class="x" style="left:237.60px;top:528.75px;width:698.70px;height:1px;background:#ebebeb"></div>
<div class="x" style="left:307.30px;top:132.80px;width:1px;height:412.80px;background:#e6e6e6"></div>
<div class="x" style="left:462.10px;top:132.80px;width:1px;height:412.80px;background:#e6e6e6"></div>
<div class="x" style="left:694.80px;top:132.80px;width:1px;height:412.80px;background:#e6e6e6"></div>
<div class="x" style="left:850.00px;top:132.80px;width:1px;height:412.80px;background:#e6e6e6"></div>
<div class="x" style="left:237.60px;top:153.50px;width:70.20px;height:20.60px;background:#d3f1e3"></div>
<div class="x" style="left:308.25px;top:153.50px;width:154.35px;height:20.60px;background:#d3f1e3"></div>
<div class="x" style="left:463.05px;top:153.50px;width:232.25px;height:20.60px;background:#d3f1e3"></div>
<span id="t59" class="x m" style="top:158.55px;font-size:10.00px;line-height:14.00px;left:242.70px;color:#222;transform-origin:0 50%;transform:scaleX(0.9162);">42101</span>
<span id="t60" class="x m" style="top:157.44px;font-size:9.30px;line-height:13.02px;left:312.60px;transform-origin:0 50%;transform:scaleX(0.9901);">上行频率（单位<span lang="zh-TW">：</span><span class="a">Hz</span>）</span>
<span id="t61" class="x m" style="top:158.55px;font-size:10.00px;line-height:14.00px;left:467.40px;color:#222;transform-origin:0 50%;transform:scaleX(0.9155);">12</span>
<div class="x tg" style="left:644.80px;top:156.60px;width:46.50px;height:14.1px;background:#c67d91"></div>
<span id="t62" class="x " style="top:158.22px;font-size:9.90px;line-height:13.86px;left:648.70px;color:#fff;transform-origin:0 50%;transform:scaleX(0.9273);-webkit-text-stroke:0.2px #fff;">Unsigned</span>
<div class="x" style="left:237.60px;top:174.40px;width:70.20px;height:20.60px;background:#d3f1e3"></div>
<div class="x" style="left:308.25px;top:174.40px;width:154.35px;height:20.60px;background:#d3f1e3"></div>
<div class="x" style="left:463.05px;top:174.40px;width:232.25px;height:20.60px;background:#d3f1e3"></div>
<span id="t63" class="x m" style="top:179.45px;font-size:10.00px;line-height:14.00px;left:242.70px;color:#222;transform-origin:0 50%;transform:scaleX(0.9162);">42102</span>
<span id="t64" class="x m" style="top:178.34px;font-size:9.30px;line-height:13.02px;left:312.60px;transform-origin:0 50%;transform:scaleX(0.9901);">下行频率（单位<span lang="zh-TW">：</span><span class="a">Hz</span>）</span>
<span id="t65" class="x m" style="top:179.45px;font-size:10.00px;line-height:14.00px;left:467.40px;color:#222;transform-origin:0 50%;transform:scaleX(0.9155);">15</span>
<div class="x tg" style="left:644.80px;top:177.50px;width:46.50px;height:14.1px;background:#c67d91"></div>
<span id="t66" class="x " style="top:179.12px;font-size:9.90px;line-height:13.86px;left:648.70px;color:#fff;transform-origin:0 50%;transform:scaleX(0.9273);-webkit-text-stroke:0.2px #fff;">Unsigned</span>
<span id="t67" class="x m" style="top:200.35px;font-size:10.00px;line-height:14.00px;left:242.70px;color:#222;transform-origin:0 50%;transform:scaleX(0.9162);">42103</span>
<span id="t68" class="x m" style="top:199.24px;font-size:9.30px;line-height:13.02px;left:312.60px;transform-origin:0 50%;transform:scaleX(0.9894);">冲次（单位<span lang="zh-TW">：</span>次<span class="a">/</span>分钟）</span>
<span id="t69" class="x m" style="top:200.35px;font-size:10.00px;line-height:14.00px;left:467.40px;color:#222;transform-origin:0 50%;transform:scaleX(0.9143);">1</span>
<div class="x tg" style="left:644.80px;top:198.40px;width:46.50px;height:14.1px;background:#c67d91"></div>
<span id="t70" class="x " style="top:200.02px;font-size:9.90px;line-height:13.86px;left:648.70px;color:#fff;transform-origin:0 50%;transform:scaleX(0.9273);-webkit-text-stroke:0.2px #fff;">Unsigned</span>
<div class="x" style="left:237.60px;top:216.20px;width:70.20px;height:20.60px;background:#a5c74e"></div>
<div class="x" style="left:308.25px;top:216.20px;width:154.35px;height:20.60px;background:#a5c74e"></div>
<div class="x" style="left:463.05px;top:216.20px;width:232.25px;height:20.60px;background:#a5c74e"></div>
<span id="t71" class="x m" style="top:221.25px;font-size:10.00px;line-height:14.00px;left:242.70px;color:#222;transform-origin:0 50%;transform:scaleX(0.9162);">42104</span>
<span id="t72" class="x m" style="top:220.14px;font-size:9.30px;line-height:13.02px;left:312.60px;transform-origin:0 50%;transform:scaleX(0.9895);">上行平均电流（单位<span lang="zh-TW">：</span><span class="a">A</span>）</span>
<span id="t73" class="x m" style="top:221.25px;font-size:10.00px;line-height:14.00px;left:467.40px;color:#222;transform-origin:0 50%;transform:scaleX(0.9155);">78</span>
<div class="x tg" style="left:644.80px;top:219.30px;width:46.50px;height:14.1px;background:#c67d91"></div>
<span id="t74" class="x " style="top:220.92px;font-size:9.90px;line-height:13.86px;left:648.70px;color:#fff;transform-origin:0 50%;transform:scaleX(0.9273);-webkit-text-stroke:0.2px #fff;">Unsigned</span>
<span id="t75" class="x m" style="top:220.14px;font-size:9.30px;line-height:13.02px;left:700.10px;transform-origin:0 50%;transform:scaleX(0.9894);">上行过程的平均直流电流</span>
<div class="x" style="left:237.60px;top:237.10px;width:70.20px;height:20.60px;background:#a5c74e"></div>
<div class="x" style="left:308.25px;top:237.10px;width:154.35px;height:20.60px;background:#a5c74e"></div>
<div class="x" style="left:463.05px;top:237.10px;width:232.25px;height:20.60px;background:#a5c74e"></div>
<span id="t76" class="x m" style="top:242.15px;font-size:10.00px;line-height:14.00px;left:242.70px;color:#222;transform-origin:0 50%;transform:scaleX(0.9162);">42105</span>
<span id="t77" class="x m" style="top:241.04px;font-size:9.30px;line-height:13.02px;left:312.60px;transform-origin:0 50%;transform:scaleX(0.9895);">下行平均电流（单位<span lang="zh-TW">：</span><span class="a">A</span>）</span>
<span id="t78" class="x m" style="top:242.15px;font-size:10.00px;line-height:14.00px;left:467.40px;color:#222;transform-origin:0 50%;transform:scaleX(0.9155);">95</span>
<div class="x tg" style="left:644.80px;top:240.20px;width:46.50px;height:14.1px;background:#c67d91"></div>
<span id="t79" class="x " style="top:241.82px;font-size:9.90px;line-height:13.86px;left:648.70px;color:#fff;transform-origin:0 50%;transform:scaleX(0.9273);-webkit-text-stroke:0.2px #fff;">Unsigned</span>
<span id="t80" class="x m" style="top:241.04px;font-size:9.30px;line-height:13.02px;left:700.10px;transform-origin:0 50%;transform:scaleX(0.9894);">下行过程的平均直流电流</span>
<span id="t81" class="x m" style="top:263.05px;font-size:10.00px;line-height:14.00px;left:242.70px;color:#222;transform-origin:0 50%;transform:scaleX(0.9162);">42106</span>
<span id="t82" class="x m" style="top:261.94px;font-size:9.30px;line-height:13.02px;left:312.60px;transform-origin:0 50%;transform:scaleX(0.9895);">输入电压（单位<span lang="zh-TW">：</span><span class="a">V</span>）</span>
<span id="t83" class="x m" style="top:263.05px;font-size:10.00px;line-height:14.00px;left:467.40px;color:#222;transform-origin:0 50%;transform:scaleX(0.9155);">56</span>
<div class="x tg" style="left:644.80px;top:261.10px;width:46.50px;height:14.1px;background:#c67d91"></div>
<span id="t84" class="x " style="top:262.72px;font-size:9.90px;line-height:13.86px;left:648.70px;color:#fff;transform-origin:0 50%;transform:scaleX(0.9273);-webkit-text-stroke:0.2px #fff;">Unsigned</span>
<span id="t85" class="x m" style="top:261.94px;font-size:9.30px;line-height:13.02px;left:700.10px;transform-origin:0 50%;transform:scaleX(0.9894);">交流输入线电压有效值</span>
<span id="t86" class="x m" style="top:283.95px;font-size:10.00px;line-height:14.00px;left:242.70px;color:#222;transform-origin:0 50%;transform:scaleX(0.9162);">42107</span>
<span id="t87" class="x m" style="top:282.84px;font-size:9.30px;line-height:13.02px;left:312.60px;transform-origin:0 50%;transform:scaleX(0.9895);">直流电压（单位<span lang="zh-TW">：</span><span class="a">V</span>）</span>
<span id="t88" class="x m" style="top:283.95px;font-size:10.00px;line-height:14.00px;left:467.40px;color:#222;transform-origin:0 50%;transform:scaleX(0.9155);">68</span>
<div class="x tg" style="left:644.80px;top:282.00px;width:46.50px;height:14.1px;background:#c67d91"></div>
<span id="t89" class="x " style="top:283.62px;font-size:9.90px;line-height:13.86px;left:648.70px;color:#fff;transform-origin:0 50%;transform:scaleX(0.9273);-webkit-text-stroke:0.2px #fff;">Unsigned</span>
<span id="t90" class="x m" style="top:282.84px;font-size:9.30px;line-height:13.02px;left:700.10px;transform-origin:0 50%;transform:scaleX(0.9894);">变频器内部直流母线电压</span>
<span id="t91" class="x m" style="top:304.85px;font-size:10.00px;line-height:14.00px;left:242.70px;color:#222;transform-origin:0 50%;transform:scaleX(0.9162);">42108</span>
<span id="t92" class="x m" style="top:303.74px;font-size:9.30px;line-height:13.02px;left:312.60px;transform-origin:0 50%;transform:scaleX(0.9895);">输入电流（单位<span lang="zh-TW">：</span><span class="a">A</span>）</span>
<span id="t93" class="x m" style="top:304.85px;font-size:10.00px;line-height:14.00px;left:467.40px;color:#222;transform-origin:0 50%;transform:scaleX(0.9143);">6</span>
<div class="x tg" style="left:644.80px;top:302.90px;width:46.50px;height:14.1px;background:#c67d91"></div>
<span id="t94" class="x " style="top:304.52px;font-size:9.90px;line-height:13.86px;left:648.70px;color:#fff;transform-origin:0 50%;transform:scaleX(0.9273);-webkit-text-stroke:0.2px #fff;">Unsigned</span>
<span id="t95" class="x m" style="top:303.74px;font-size:9.30px;line-height:13.02px;left:700.10px;transform-origin:0 50%;transform:scaleX(0.9894);">输出线电流有效值</span>
<div class="x" style="left:308.25px;top:320.70px;width:154.35px;height:20.60px;background:#e98773"></div>
<span id="t96" class="x m" style="top:325.75px;font-size:10.00px;line-height:14.00px;left:242.70px;color:#222;transform-origin:0 50%;transform:scaleX(0.9162);">42109</span>
<span id="t97" class="x m" style="top:324.64px;font-size:9.30px;line-height:13.02px;left:312.60px;transform-origin:0 50%;transform:scaleX(0.9891);">散热器温度（单位<span lang="zh-TW">：</span>℃）</span>
<span id="t98" class="x m" style="top:325.75px;font-size:10.00px;line-height:14.00px;left:467.40px;color:#222;transform-origin:0 50%;transform:scaleX(0.9155);">78</span>
<div class="x tg" style="left:656.00px;top:323.80px;width:35.30px;height:14.1px;background:#a392df"></div>
<span id="t99" class="x " style="top:325.42px;font-size:9.90px;line-height:13.86px;left:659.85px;color:#fff;transform-origin:0 50%;transform:scaleX(0.8976);-webkit-text-stroke:0.2px #fff;">Signed</span>
<div class="x" style="left:308.25px;top:341.60px;width:154.35px;height:20.60px;background:#e98773"></div>
<span id="t100" class="x m" style="top:346.65px;font-size:10.00px;line-height:14.00px;left:242.70px;color:#222;transform-origin:0 50%;transform:scaleX(0.9162);">42110</span>
<span id="t101" class="x m" style="top:345.54px;font-size:9.30px;line-height:13.02px;left:312.60px;transform-origin:0 50%;transform:scaleX(0.9891);">控制器温度（单位<span lang="zh-TW">：</span>℃）</span>
<span id="t102" class="x m" style="top:346.65px;font-size:10.00px;line-height:14.00px;left:467.40px;color:#222;transform-origin:0 50%;transform:scaleX(0.9155);">69</span>
<div class="x tg" style="left:656.00px;top:344.70px;width:35.30px;height:14.1px;background:#a392df"></div>
<span id="t103" class="x " style="top:346.32px;font-size:9.90px;line-height:13.86px;left:659.85px;color:#fff;transform-origin:0 50%;transform:scaleX(0.8976);-webkit-text-stroke:0.2px #fff;">Signed</span>
<div class="x" style="left:308.25px;top:362.50px;width:154.35px;height:20.60px;background:#e98773"></div>
<span id="t104" class="x m" style="top:367.55px;font-size:10.00px;line-height:14.00px;left:242.70px;color:#222;transform-origin:0 50%;transform:scaleX(0.9162);">42111</span>
<span id="t105" class="x m" style="top:366.44px;font-size:9.30px;line-height:13.02px;left:312.60px;transform-origin:0 50%;transform:scaleX(0.9891);">井下温度（单位<span lang="zh-TW">：</span>℃）</span>
<span id="t106" class="x m" style="top:367.55px;font-size:10.00px;line-height:14.00px;left:467.40px;color:#222;transform-origin:0 50%;transform:scaleX(0.9155);">56</span>
<div class="x tg" style="left:656.00px;top:365.60px;width:35.30px;height:14.1px;background:#a392df"></div>
<span id="t107" class="x " style="top:367.22px;font-size:9.90px;line-height:13.86px;left:659.85px;color:#fff;transform-origin:0 50%;transform:scaleX(0.8976);-webkit-text-stroke:0.2px #fff;">Signed</span>
<span id="t108" class="x m" style="top:388.45px;font-size:10.00px;line-height:14.00px;left:242.70px;color:#222;transform-origin:0 50%;transform:scaleX(0.9162);">42112</span>
<span id="t109" class="x m" style="top:387.34px;font-size:9.30px;line-height:13.02px;left:312.60px;transform-origin:0 50%;transform:scaleX(0.9907);">井下压力（单位<span lang="zh-TW">：</span><span class="a">MPa</span>）</span>
<span id="t110" class="x m" style="top:388.45px;font-size:10.00px;line-height:14.00px;left:467.40px;color:#222;transform-origin:0 50%;transform:scaleX(0.9161);">1002</span>
<div class="x tg" style="left:644.80px;top:386.50px;width:46.50px;height:14.1px;background:#c67d91"></div>
<span id="t111" class="x " style="top:388.12px;font-size:9.90px;line-height:13.86px;left:648.70px;color:#fff;transform-origin:0 50%;transform:scaleX(0.9273);-webkit-text-stroke:0.2px #fff;">Unsigned</span>
<div class="x" style="left:463.05px;top:404.30px;width:232.25px;height:20.60px;background:#9fb1a6"></div>
<span id="t112" class="x m" style="top:409.35px;font-size:10.00px;line-height:14.00px;left:242.70px;color:#222;transform-origin:0 50%;transform:scaleX(0.9162);">42113</span>
<span id="t113" class="x m" style="top:408.24px;font-size:9.30px;line-height:13.02px;left:312.60px;transform-origin:0 50%;transform:scaleX(0.9902);">运行时间<span class="a">A</span></span>
<span id="t114" class="x m" style="top:409.35px;font-size:10.00px;line-height:14.00px;left:467.40px;color:#222;transform-origin:0 50%;transform:scaleX(0.9155);">17</span>
<div class="x tg" style="left:644.80px;top:407.40px;width:46.50px;height:14.1px;background:#c67d91"></div>
<span id="t115" class="x " style="top:409.02px;font-size:9.90px;line-height:13.86px;left:648.70px;color:#fff;transform-origin:0 50%;transform:scaleX(0.9273);-webkit-text-stroke:0.2px #fff;">Unsigned</span>
<div class="x" style="left:463.05px;top:425.20px;width:232.25px;height:20.60px;background:#9fb1a6"></div>
<span id="t116" class="x m" style="top:430.25px;font-size:10.00px;line-height:14.00px;left:242.70px;color:#222;transform-origin:0 50%;transform:scaleX(0.9162);">42114</span>
<span id="t117" class="x m" style="top:429.14px;font-size:9.30px;line-height:13.02px;left:312.60px;transform-origin:0 50%;transform:scaleX(0.9902);">运行时间<span class="a">B</span></span>
<span id="t118" class="x m" style="top:430.25px;font-size:10.00px;line-height:14.00px;left:467.40px;color:#222;transform-origin:0 50%;transform:scaleX(0.9155);">15</span>
<div class="x tg" style="left:644.80px;top:428.30px;width:46.50px;height:14.1px;background:#c67d91"></div>
<span id="t119" class="x " style="top:429.92px;font-size:9.90px;line-height:13.86px;left:648.70px;color:#fff;transform-origin:0 50%;transform:scaleX(0.9273);-webkit-text-stroke:0.2px #fff;">Unsigned</span>
<span id="t120" class="x m" style="top:451.15px;font-size:10.00px;line-height:14.00px;left:242.70px;color:#222;transform-origin:0 50%;transform:scaleX(0.9162);">42115</span>
<span id="t121" class="x m" style="top:450.04px;font-size:9.30px;line-height:13.02px;left:312.60px;transform-origin:0 50%;transform:scaleX(0.9902);">上电时间<span class="a">A</span></span>
<span id="t122" class="x m" style="top:451.15px;font-size:10.00px;line-height:14.00px;left:467.40px;color:#222;transform-origin:0 50%;transform:scaleX(0.9155);">56</span>
<div class="x tg" style="left:644.80px;top:449.20px;width:46.50px;height:14.1px;background:#c67d91"></div>
<span id="t123" class="x " style="top:450.82px;font-size:9.90px;line-height:13.86px;left:648.70px;color:#fff;transform-origin:0 50%;transform:scaleX(0.9273);-webkit-text-stroke:0.2px #fff;">Unsigned</span>
<span id="t124" class="x m" style="top:472.05px;font-size:10.00px;line-height:14.00px;left:242.70px;color:#222;transform-origin:0 50%;transform:scaleX(0.9162);">42116</span>
<span id="t125" class="x m" style="top:470.94px;font-size:9.30px;line-height:13.02px;left:312.60px;transform-origin:0 50%;transform:scaleX(0.9902);">上电时间<span class="a">B</span></span>
<span id="t126" class="x m" style="top:472.05px;font-size:10.00px;line-height:14.00px;left:467.40px;color:#222;transform-origin:0 50%;transform:scaleX(0.9155);">77</span>
<div class="x tg" style="left:644.80px;top:470.10px;width:46.50px;height:14.1px;background:#c67d91"></div>
<span id="t127" class="x " style="top:471.72px;font-size:9.90px;line-height:13.86px;left:648.70px;color:#fff;transform-origin:0 50%;transform:scaleX(0.9273);-webkit-text-stroke:0.2px #fff;">Unsigned</span>
<span id="t128" class="x m" style="top:492.95px;font-size:10.00px;line-height:14.00px;left:242.70px;color:#222;transform-origin:0 50%;transform:scaleX(0.9162);">42117</span>
<span id="t129" class="x m" style="top:491.84px;font-size:9.30px;line-height:13.02px;left:312.60px;transform-origin:0 50%;transform:scaleX(0.9901);">累计耗电量<span class="a">A</span></span>
<span id="t130" class="x m" style="top:492.95px;font-size:10.00px;line-height:14.00px;left:467.40px;color:#222;transform-origin:0 50%;transform:scaleX(0.9165);">0000000111000000</span>
<div class="x tg" style="left:658.30px;top:491.00px;width:33.00px;height:14.1px;background:#19a8c8"></div>
<span id="t131" class="x " style="top:492.62px;font-size:9.90px;line-height:13.86px;left:662.10px;color:#fff;transform-origin:0 50%;transform:scaleX(0.9071);-webkit-text-stroke:0.2px #fff;">Binary</span>
<span id="t132" class="x m" style="top:513.85px;font-size:10.00px;line-height:14.00px;left:242.70px;color:#222;transform-origin:0 50%;transform:scaleX(0.9162);">42118</span>
<span id="t133" class="x m" style="top:512.74px;font-size:9.30px;line-height:13.02px;left:312.60px;transform-origin:0 50%;transform:scaleX(0.9901);">累计耗电量<span class="a">B</span></span>
<span id="t134" class="x m" style="top:513.85px;font-size:10.00px;line-height:14.00px;left:467.40px;color:#222;transform-origin:0 50%;transform:scaleX(0.9165);">0000000110000101</span>
<div class="x tg" style="left:658.30px;top:511.90px;width:33.00px;height:14.1px;background:#19a8c8"></div>
<span id="t135" class="x " style="top:513.52px;font-size:9.90px;line-height:13.86px;left:662.10px;color:#fff;transform-origin:0 50%;transform:scaleX(0.9071);-webkit-text-stroke:0.2px #fff;">Binary</span>
<span id="t136" class="x m" style="top:534.75px;font-size:10.00px;line-height:14.00px;left:242.70px;color:#222;transform-origin:0 50%;transform:scaleX(0.9162);">42119</span>
<span id="t137" class="x m" style="top:534.75px;font-size:10.00px;line-height:14.00px;left:467.40px;color:#222;transform-origin:0 50%;transform:scaleX(0.9143);">0</span>
<div class="x tg" style="left:644.80px;top:532.80px;width:46.50px;height:14.1px;background:#c67d91"></div>
<span id="t138" class="x " style="top:534.42px;font-size:9.90px;line-height:13.86px;left:648.70px;color:#fff;transform-origin:0 50%;transform:scaleX(0.9273);-webkit-text-stroke:0.2px #fff;">Unsigned</span>
<span id="t139" class="x " style="top:137.19px;font-size:9.30px;line-height:13.02px;left:243.00px;font-weight:bold;transform-origin:0 50%;transform:scaleX(0.9941);">地址</span>
<span id="t140" class="x " style="top:137.19px;font-size:9.30px;line-height:13.02px;left:312.80px;font-weight:bold;transform-origin:0 50%;transform:scaleX(0.9944);">变量名</span>
<span id="t141" class="x " style="top:137.19px;font-size:9.30px;line-height:13.02px;left:467.20px;font-weight:bold;transform-origin:0 50%;transform:scaleX(0.9945);">寄存器值</span>
<span id="t142" class="x " style="top:137.19px;font-size:9.30px;line-height:13.02px;left:700.00px;font-weight:bold;transform-origin:0 50%;transform:scaleX(0.9941);">注释</span>
<div class="x" style="left:936.3px;top:132.80px;width:12.2px;height:412.80px;background:#f3f3f3;border-top:1px solid #e4e4e4"></div>
<div class="x" style="left:939.1px;top:146px;width:6.8px;height:146.8px;background:#c2c2c2"></div>
<svg class="x" style="left:940.0px;top:136.2px;width:5.3px;height:7.2px" viewBox="0 0 6 7.4"><path d="M3 0.6 L5.5 6.9 H0.5 Z" fill="#d4d4d4" stroke="#a2a2a2" stroke-width="0.8"/></svg>
<svg class="x" style="left:940.0px;top:534.6px;width:5.3px;height:7.2px" viewBox="0 0 6 7.4"><path d="M3 6.8 L5.5 0.5 H0.5 Z" fill="#d4d4d4" stroke="#a2a2a2" stroke-width="0.8"/></svg>
<div class="x" style="left:0;top:545.3px;width:950px;height:22.7px;background:#e6e6e6;border-top:1px solid #dddddd"></div>
<span id="t143" class="x " style="top:550.67px;font-size:9.90px;line-height:13.86px;left:4.60px;transform-origin:0 50%;transform:scaleX(0.9945);">Slave3-4x-0-50</span>
<span id="t144" class="x " style="top:550.67px;font-size:9.90px;line-height:13.86px;left:872.60px;transform-origin:0 50%;transform:scaleX(0.9781);">Read: 0, Write: 0</span>
<div class="x" style="left:0;top:23.6px;width:1px;height:545px;background:#59636e"></div>
<div class="x" style="left:947.7px;top:23.6px;width:1.1px;height:545px;background:#f2f2f2"></div>
<div class="x" style="left:948.7px;top:23.6px;width:1.3px;height:545px;background:#33485e"></div>
<div class="x" style="left:0;top:566.4px;width:950px;height:1.6px;background:#33485e"></div>
</div>
</body>
</html>
